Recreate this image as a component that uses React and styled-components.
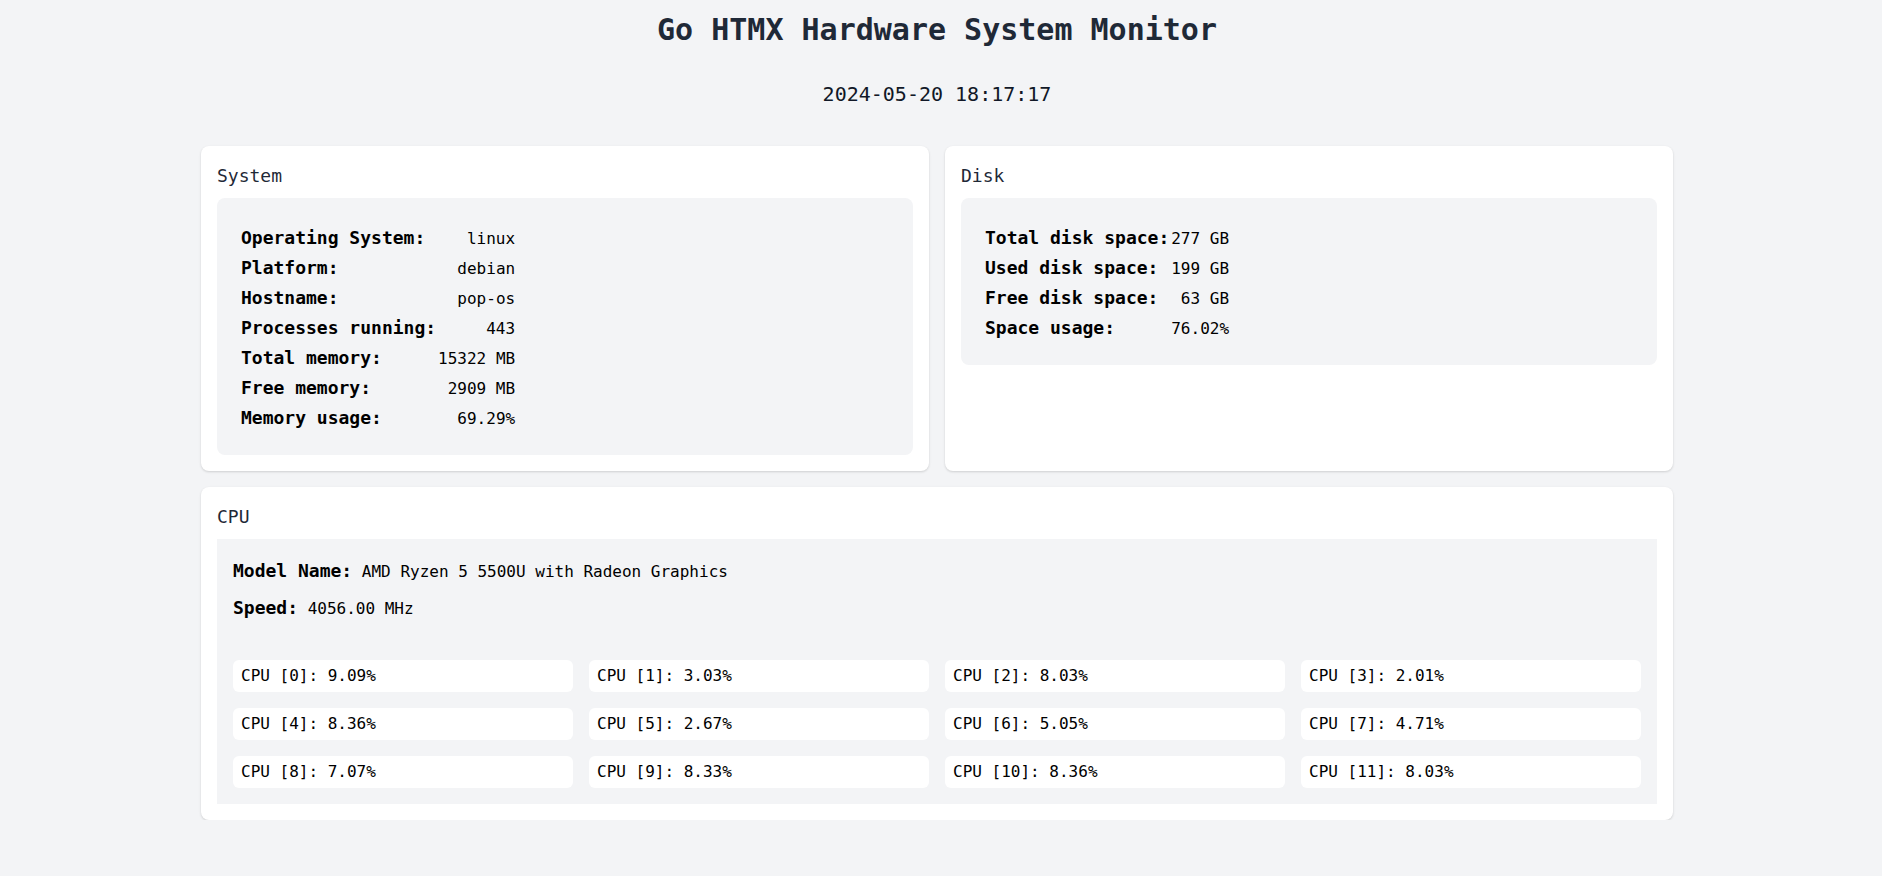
import React from 'react';
import styled, { createGlobalStyle } from 'styled-components';

const GlobalStyle = createGlobalStyle`
  * {
    box-sizing: border-box;
  }
  body {
    margin: 0;
    background: #f3f4f6;
    font-family: "DejaVu Sans Mono", "Liberation Mono", monospace;
    color: #111827;
  }
`
const PageStyled = styled.div`
  padding: 12px 8px 0 0;
`
const HeaderStyled = styled.header`
  text-align: center;
`
const TitleStyled = styled.h1`
  margin: 0;
  font-size: 30px;
  line-height: 36px;
  font-weight: 700;
  color: #1f2937;
`
const DateStyled = styled.p`
  margin: 32px 0 38px;
  font-size: 20px;
  line-height: 28px;
  color: #111827;
`
const ContainerStyled = styled.main`
  max-width: 1536px;
  margin: 0 auto;
  padding: 0 32px;
`
const TopGridStyled = styled.div`
  display: grid;
  grid-template-columns: 1fr 1fr;
  gap: 16px;
`
const CardStyled = styled.section`
  background: #fff;
  border-radius: 8px;
  padding: 16px;
  box-shadow: 0 1px 3px rgb(0 0 0 / 10%), 0 1px 2px rgb(0 0 0 / 6%);
  margin-top: ${p => (p.$spaced ? '16px' : '0')};
`
const CardTitleStyled = styled.h2`
  margin: 0 0 8px;
  font-size: 18px;
  line-height: 28px;
  font-weight: 400;
  color: #1f2937;
`
const StatBoxStyled = styled.div`
  background: #f3f4f6;
  border-radius: 8px;
  padding: 25px 24px 22px;
`
const StatTableStyled = styled.div`
  display: grid;
  grid-template-columns: auto auto;
  grid-auto-rows: 30px;
  justify-content: start;
  column-gap: 2px;
`
const StatLabelStyled = styled.span`
  font-size: 18px;
  line-height: 30px;
  font-weight: 700;
  color: #000;
`
const StatValueStyled = styled.span`
  font-size: 16px;
  line-height: 31px;
  text-align: right;
  color: #000;
`
const CpuBoxStyled = styled.div`
  background: #f3f4f6;
  padding: 18px 16px 16px;
`
const InfoLineStyled = styled.p`
  margin: 0 0 8px;
  font-size: 16px;
  line-height: 28px;
  color: #000;
  strong {
    font-size: 18px;
    font-weight: 700;
  }
`
const CpuGridStyled = styled.div`
  display: grid;
  grid-template-columns: repeat(4, 1fr);
  gap: 16px;
  margin-top: 37px;
`
const CpuItemStyled = styled.div`
  background: #fff;
  border-radius: 6px;
  padding: 4px 8px;
  font-size: 16px;
  line-height: 24px;
  color: #000;
`

const systemStats = [
  ['Operating System:', 'linux'],
  ['Platform:', 'debian'],
  ['Hostname:', 'pop-os'],
  ['Processes running:', '443'],
  ['Total memory:', '15322 MB'],
  ['Free memory:', '2909 MB'],
  ['Memory usage:', '69.29%'],
]

const diskStats = [
  ['Total disk space:', '277 GB'],
  ['Used disk space:', '199 GB'],
  ['Free disk space:', '63 GB'],
  ['Space usage:', '76.02%'],
]

const cpuUsage = ['9.09', '3.03', '8.03', '2.01', '8.36', '2.67', '5.05', '4.71', '7.07', '8.33', '8.36', '8.03']

const StatTable = ({ rows }) => (
  <StatBoxStyled>
    <StatTableStyled>
      {rows.map(([label, value]) => (
        <React.Fragment key={label}>
          <StatLabelStyled>{label}</StatLabelStyled>
          <StatValueStyled>{value}</StatValueStyled>
        </React.Fragment>
      ))}
    </StatTableStyled>
  </StatBoxStyled>
)

const App = () => {
  return (
    <PageStyled>
      <GlobalStyle />
      <HeaderStyled>
        <TitleStyled>Go HTMX Hardware System Monitor</TitleStyled>
        <DateStyled>2024-05-20 18:17:17</DateStyled>
      </HeaderStyled>
      <ContainerStyled>
        <TopGridStyled>
          <CardStyled>
            <CardTitleStyled>System</CardTitleStyled>
            <StatTable rows={systemStats} />
          </CardStyled>
          <CardStyled>
            <CardTitleStyled>Disk</CardTitleStyled>
            <StatTable rows={diskStats} />
          </CardStyled>
        </TopGridStyled>
        <CardStyled $spaced>
          <CardTitleStyled>CPU</CardTitleStyled>
          <CpuBoxStyled>
            <InfoLineStyled><strong>Model Name:</strong> AMD Ryzen 5 5500U with Radeon Graphics</InfoLineStyled>
            <InfoLineStyled><strong>Speed:</strong> 4056.00 MHz</InfoLineStyled>
            <CpuGridStyled>
              {cpuUsage.map((usage, i) => (
                <CpuItemStyled key={i}>CPU [{i}]: {usage}%</CpuItemStyled>
              ))}
            </CpuGridStyled>
          </CpuBoxStyled>
        </CardStyled>
      </ContainerStyled>
    </PageStyled>
  )
}

export default App
